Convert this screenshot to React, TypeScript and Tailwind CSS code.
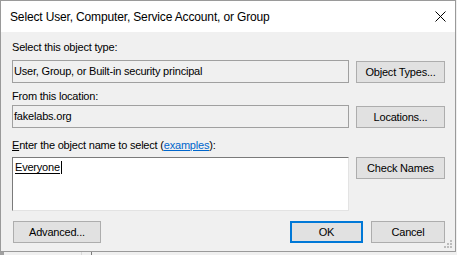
import React from "react";

function Button({ label, w, focused }: { label: React.ReactNode; w: string; focused?: boolean }) {
  return (
    <div
      className={`${w} h-[22px] bg-[#e1e1e1] flex items-center justify-center text-black ${
        focused ? "border-2 border-[#0078d7]" : "border border-[#adadad]"
      }`}
    >
      {label}
    </div>
  );
}

function SizeGrip() {
  const dots = [
    [6, 0],
    [3, 3],
    [6, 3],
    [0, 6],
    [3, 6],
    [6, 6],
  ];
  return (
    <svg width="8" height="8" className="absolute right-[3px] bottom-[3px]">
      {dots.map(([x, y], i) => (
        <rect key={i} x={x} y={y} width="2" height="2" fill="#bcbcbc" />
      ))}
    </svg>
  );
}

export default function App() {
  return (
    <div
      className="w-[457px] h-[255px] bg-[#f0f0f0] overflow-hidden flex flex-col"
      style={{ fontFamily: '"Liberation Sans", Arial, sans-serif' }}
    >
      {/* dialog window */}
      <div className="w-[456px] h-[252px] shrink-0 border border-[#9a9a9a] flex flex-col">
        {/* title bar */}
        <div className="h-[31px] shrink-0 bg-white flex items-center justify-between pl-[9px] pr-[9px]">
          <span className="text-[12px] text-black leading-[16px] tracking-[-0.15px]">
            Select User, Computer, Service Account, or Group
          </span>
          <svg width="11" height="11" viewBox="0 0 11 11">
            <path d="M0.5 0.5 L10.5 10.5 M10.5 0.5 L0.5 10.5" stroke="#000" strokeWidth="1" />
          </svg>
        </div>

        {/* body */}
        <div className="flex-1 relative bg-[#f0f0f0] pl-[11px] pt-[9px] text-[11px] leading-[13px] tracking-[-0.2px] text-black">
          <div className="h-[13px]">Select this object type:</div>
          <div className="flex gap-[7px] mt-[6px]">
            <div className="w-[337px] h-[23px] border border-[#a0a0a0] bg-[#f0f0f0] flex items-center pl-[1px]">
              User, Group, or Built-in security principal
            </div>
            <div className="mt-[1px]">
              <Button label="Object Types..." w="w-[89px]" />
            </div>
          </div>

          <div className="h-[13px] mt-[7px]">From this location:</div>
          <div className="flex gap-[7px] mt-[2px]">
            <div className="w-[337px] h-[23px] border border-[#a0a0a0] bg-[#f0f0f0] flex items-center pl-[1px]">
              fakelabs.org
            </div>
            <div className="mt-[1px]">
              <Button label="Locations..." w="w-[89px]" />
            </div>
          </div>

          <div className="h-[13px] mt-[11px]">
            <span className="underline underline-offset-[1px]">E</span>nter the object name to select (
            <span className="text-[#0066cc] underline underline-offset-[1px]">examples</span>):
          </div>
          <div className="flex gap-[7px] mt-[5px]">
            <div className="w-[337px] h-[54px] bg-white border-t border-l border-t-[#7a7a7a] border-l-[#7a7a7a] border-r border-b border-r-[#e3e3e3] border-b-[#e3e3e3] pl-[2px] pt-[3px]">
              <span className="inline-flex items-stretch">
                <span className="border-b border-black leading-[12px]">Everyone</span>
                <span className="w-px bg-black ml-[1px]" />
              </span>
            </div>
            <Button label="Check Names" w="w-[89px]" />
          </div>

          <div className="flex mt-[10px] pl-[1px]">
            <Button label="Advanced..." w="w-[88px]" />
            <div className="ml-[189px]">
              <Button label="OK" w="w-[73px]" focused />
            </div>
            <div className="ml-[8px]">
              <Button label="Cancel" w="w-[74px]" />
            </div>
          </div>
          <SizeGrip />
        </div>
      </div>

      {/* window behind the dialog */}
      <div className="h-[3px] flex text-[11px] leading-[13px] text-black overflow-hidden">
        <div className="w-[4px] bg-[#a0a0a0]" />
        <div className="w-[78px] border-r border-[#d9d9d9]" />
        <div className="w-[10px] border-r border-[#7a7a7a]" />
        <div className="pl-[5px] pt-[1px]">Special permissions</div>
      </div>
    </div>
  );
}
